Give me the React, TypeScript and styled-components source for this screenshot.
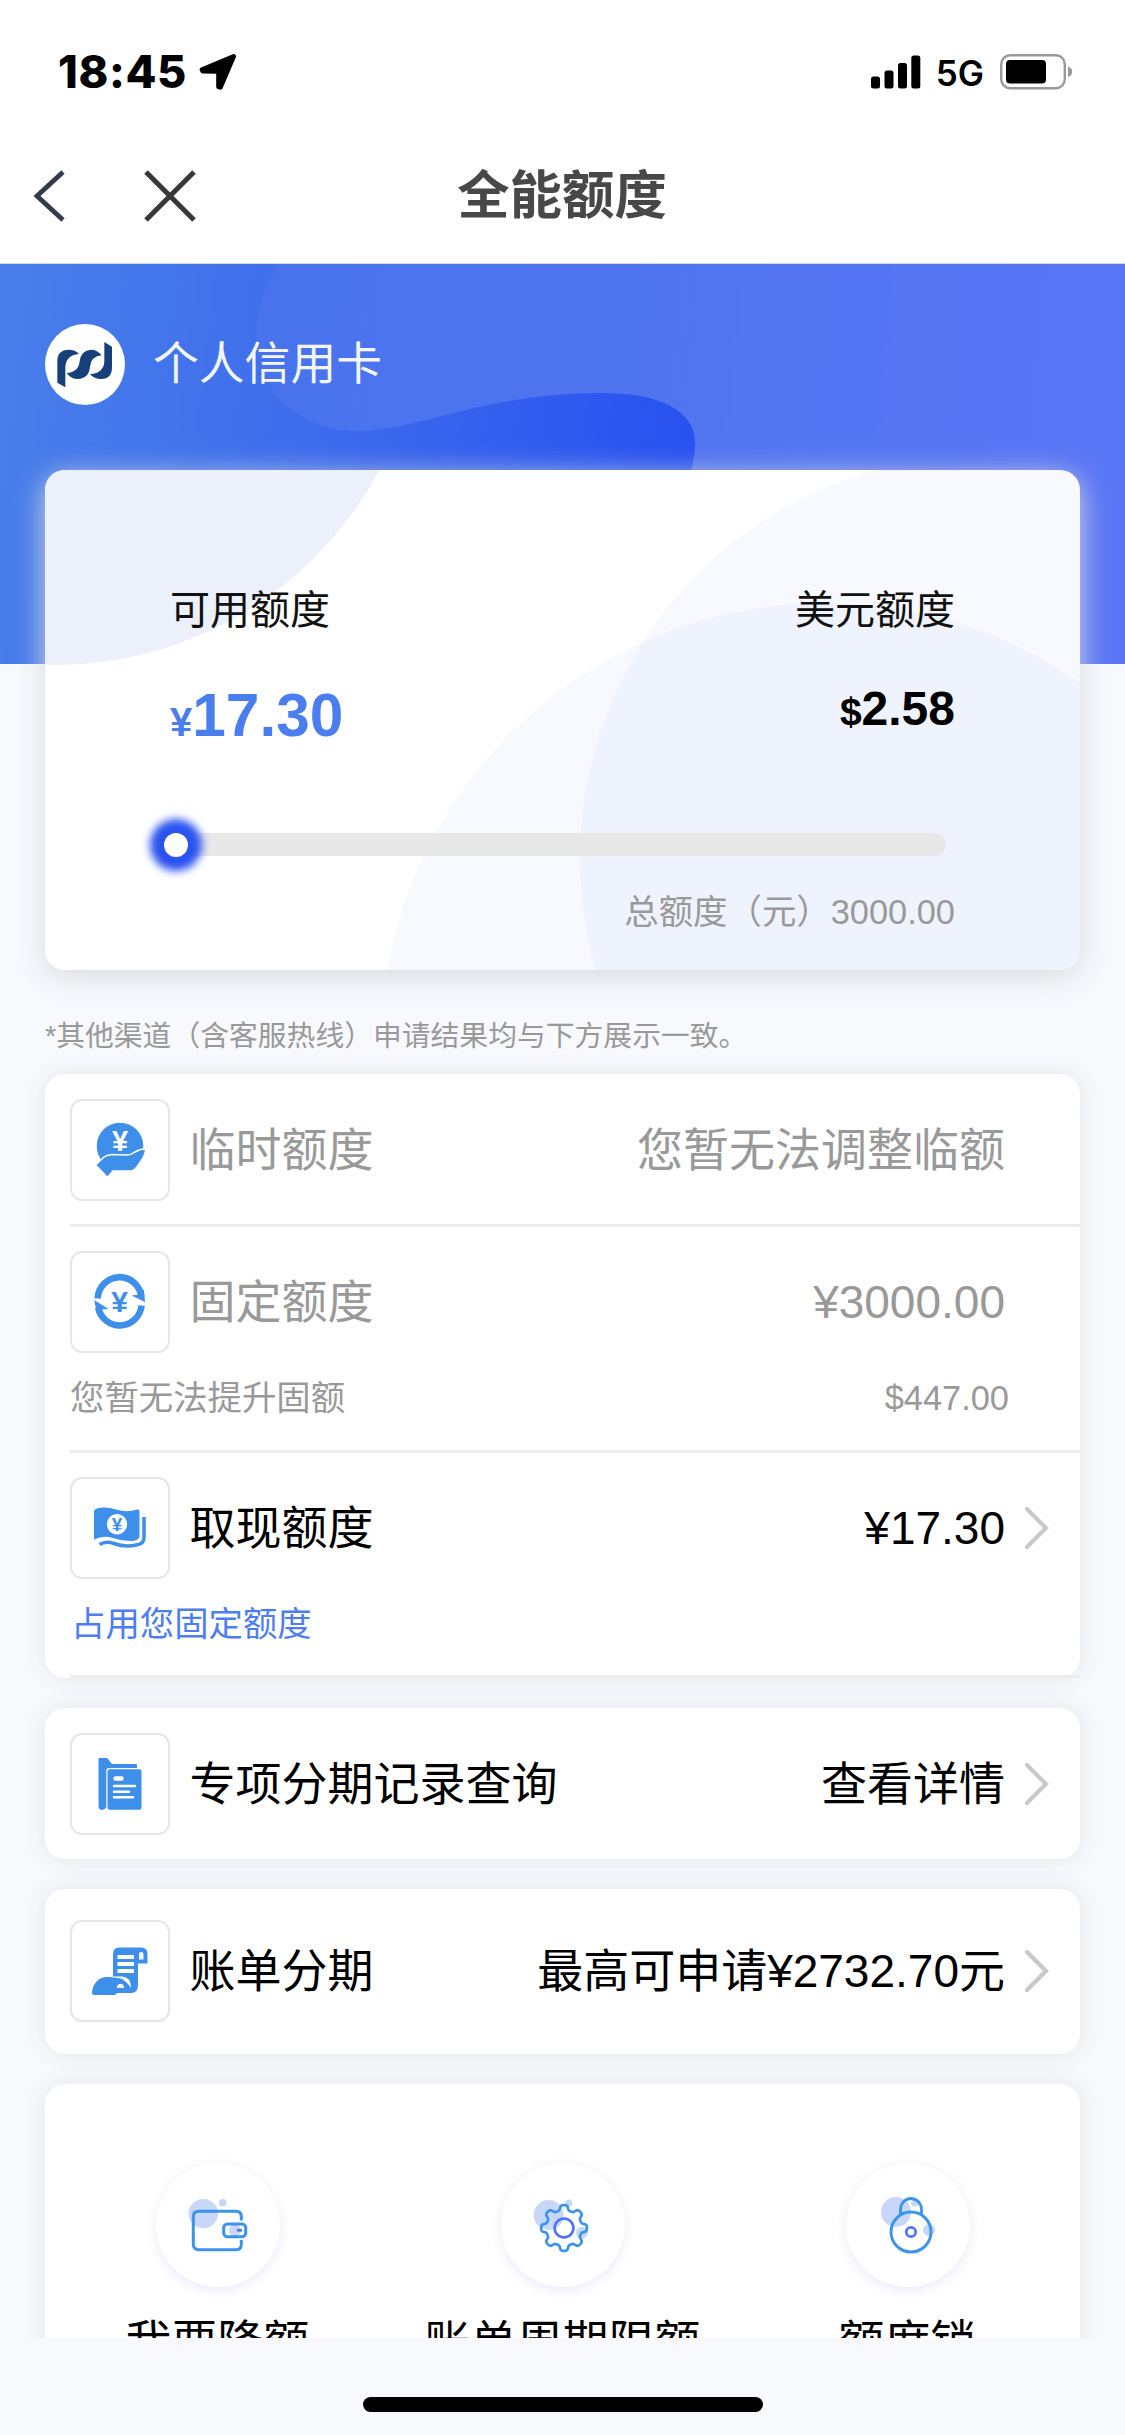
import React from "react";
import styled, { createGlobalStyle } from "styled-components";

const sans = `"Liberation Sans", "Noto Sans CJK SC", sans-serif`;

const GlobalStyle = createGlobalStyle`
  * { box-sizing: border-box; }
  body { margin: 0; background: #f7f9fd; font-family: ${sans}; }
  svg { display: block; flex: none; }
`;

const Screen = styled.div`
  width: 1125px;
  height: 2435px;
  display: flex;
  flex-direction: column;
  overflow: hidden;
  background: #f7f9fd;
`;

/* ---------- status bar and title bar ---------- */

const StatusBar = styled.div`
  height: 129px;
  flex: none;
  display: flex;
  align-items: center;
  justify-content: space-between;
  padding: 14px 52px 0 58px;
  background: #fff;
  font-family: Inter, sans-serif;
  color: #000;
`;

const StatusGroup = styled.div<{ $gap: number }>`
  display: flex;
  align-items: center;
  gap: ${(p) => p.$gap}px;
`;

const Clock = styled.span`
  font-size: 45px;
  font-weight: 800;
  line-height: 50px;
  letter-spacing: 0.6px;
`;

const Network = styled.span`
  font-size: 35px;
  font-weight: 600;
  line-height: 40px;
  margin: 3px 1px 0 0;
`;

const NavBar = styled.header`
  height: 135px;
  flex: none;
  display: grid;
  grid-template-columns: 1fr auto 1fr;
  align-items: center;
  padding-left: 33px;
  background: #fff;
  border-bottom: 1px solid #d4d8e4;
`;

const NavButtons = styled.div`
  display: flex;
  gap: 79px;
`;

const Title = styled.h1`
  margin: 0 34px 0 0;
  font-size: 52.4px;
  line-height: 60px;
  font-weight: 700;
  color: #484848;
`;

/* ---------- scroll area ---------- */

const Content = styled.main`
  height: 2074px;
  flex: none;
  overflow: hidden;
`;

const Hero = styled.section`
  position: relative;
  height: 400px;
`;

const HeroArt = styled.svg`
  position: absolute;
  inset: 0;
`;

const Account = styled.div`
  position: relative;
  display: flex;
  align-items: center;
  gap: 28px;
  padding: 60px 0 0 45px;
`;

const AccountName = styled.span`
  font-size: 45.8px;
  line-height: 60px;
  color: #f2f6ff;
`;

const SummaryCard = styled.section`
  position: relative;
  height: 500px;
  margin: -194px 45px 0;
  border-radius: 20px;
  background: #fff;
  box-shadow: 0 7px 30px #d9dbdf;
`;

const SummaryArt = styled.svg`
  position: absolute;
  inset: 0;
  border-radius: 20px;
`;

const SummaryBody = styled.div`
  position: relative;
  display: flex;
  flex-direction: column;
  padding: 115px 125px 0 125px;
`;

const Split = styled.div<{ $align?: string }>`
  display: flex;
  justify-content: space-between;
  align-items: ${(p) => p.$align ?? "center"};
`;

const LimitLabel = styled.span`
  font-size: 40px;
  line-height: 50px;
  color: #111;
`;

const Amount = styled.div<{ $size: number; $unit: number; $line: number; $color: string }>`
  font-weight: 700;
  font-size: ${(p) => p.$size}px;
  line-height: ${(p) => p.$line}px;
  color: ${(p) => p.$color};
  small { font-size: ${(p) => p.$unit}px; }
`;

const Amounts = styled(Split)`
  margin-top: 45px;
  height: 83px;
`;

const Track = styled.div`
  display: flex;
  align-items: center;
  height: 23px;
  margin: 70px 9px 0 -6px;
  border-radius: 12px;
  background: #e8e8e8;
`;

const Thumb = styled.i`
  width: 24px;
  height: 24px;
  border-radius: 50%;
  background: #fff;
  box-shadow: 0 0 9px 14px #2a52ee;
`;

const Total = styled.div`
  margin-top: 34px;
  text-align: right;
  font-size: 34.4px;
  line-height: 44px;
  color: #999;
`;

const Note = styled.p`
  margin: 46px 0 0 45px;
  font-size: 28.8px;
  line-height: 40px;
  color: #999;
`;

const Card = styled.section<{ $top: number }>`
  margin: ${(p) => p.$top}px 45px 0;
  border-radius: 20px;
  background: #fff;
  box-shadow: 0 0 22px rgba(60, 60, 70, 0.11);
`;

const Item = styled.div<{ $height: number; $top?: number; $line?: boolean }>`
  height: ${(p) => p.$height}px;
  margin-left: 25px;
  padding-top: ${(p) => p.$top ?? 25}px;
  border-bottom: ${(p) => (p.$line ? "3px solid #ededed" : "0")};
`;

const ItemRow = styled.div<{ $muted?: boolean }>`
  display: flex;
  align-items: center;
  height: 102px;
  padding-right: 31px;
  font-size: 46px;
  line-height: 60px;
  color: ${(p) => (p.$muted ? "#999" : "#000")};
`;

const IconBox = styled.div`
  width: 100px;
  height: 102px;
  margin-right: 19.5px;
  border: 2px solid #e6e6e6;
  border-radius: 12px;
  svg { margin: -2px; }
`;

const Value = styled.span`
  margin-left: auto;
`;

const ArrowSlot = styled.span`
  width: 24px;
  margin-left: 20px;
`;

const SubRow = styled.div<{ $color: string; $indent?: number }>`
  display: flex;
  justify-content: space-between;
  margin: 22px 71px 0 ${(p) => p.$indent ?? 0}px;
  font-size: 34.4px;
  line-height: 46px;
  color: ${(p) => p.$color};
`;

const Tools = styled(Card)`
  height: 400px;
  display: grid;
  grid-template-columns: repeat(3, 1fr);
  padding-top: 79px;
`;

const Tool = styled.div`
  display: flex;
  flex-direction: column;
  align-items: center;
  font-size: 46px;
  line-height: 60px;
  color: #000;
  gap: 25px;
`;

const ToolDisc = styled.div`
  width: 124px;
  height: 124px;
  border-radius: 50%;
  background: #fff;
  box-shadow: 0 3px 12px rgba(80, 70, 220, 0.12);
`;

const HomeArea = styled.footer`
  display: flex;
  justify-content: center;
  padding-top: 59px;
`;

const HomeBar = styled.i`
  width: 400px;
  height: 15px;
  border-radius: 8px;
  background: #000;
`;

/* ---------- drawings ---------- */

const BLUE = "#3d8fea";

const Yen = ({ x, y, size, fill }: { x: number; y: number; size: number; fill: string }) => (
  <text x={x} y={y} fontSize={size} fontWeight={700} textAnchor="middle" fill={fill}>
    ¥
  </text>
);

const RowSvg = ({ children }: { children: React.ReactNode }) => (
  <svg width="100" height="102" viewBox="0 0 100 102">{children}</svg>
);

const HandCoin = () => (
  <RowSvg>
    <circle cx="50" cy="47" r="23.3" fill={BLUE} />
    <Yen x={50} y={52} size={29} fill="#fff" />
    <path
      d="M25.5 66L33 59Q36 56 42 55.5L57 56Q61 56 64 53.500L69 51Q72 49.500 76 51Q74 59 69 65Q65 72 61 72H43L37.5 78.500Z"
      fill={BLUE}
      stroke="#fff"
      strokeWidth="1.6"
    />
  </RowSvg>
);

const CycleCoin = () => (
  <RowSvg>
    <g fill="none" stroke={BLUE} strokeWidth="6.6">
      <path d="M27.6 47.5A22 22.6 0 0 1 71.4 46" />
      <path d="M71.6 54.5A22 22.6 0 0 1 28.2 56.5" />
    </g>
    <path d="M61.5 44.5L69 43.5L73.8 38.5L75 51ZM24.2 49L38.5 58L31 58.5L27 63Z" fill={BLUE} />
    <Yen x={49.7} y={61.3} size={30} fill={BLUE} />
  </RowSvg>
);

const Banknote = () => (
  <RowSvg>
    <path
      d="M24 34Q25 31 32 30.5Q39 30 46 32.5Q57 36 67 32.5Q69.5 32 69.5 34.500V59Q69.500 64 60 64Q51 64 43 61Q34 58 24 62.500Z"
      fill={BLUE}
    />
    <path
      d="M29.500 67.500Q36 63.500 44 66.500Q55 70.500 66 68Q74 67 74 61V40"
      fill="none"
      stroke={BLUE}
      strokeWidth="3.5"
    />
    <circle cx="47" cy="47.300" r="10.200" fill="#fff" />
    <Yen x={47} y={53.500} size={19} fill={BLUE} />
  </RowSvg>
);

const FolderDoc = () => (
  <RowSvg>
    <path
      d="M28.500 26Q28.500 25 29.500 25H36.500Q37.500 25 38 26L42 31H66Q67 31 67 32V35H39Q36.300 35 36.300 38V74Q35 77 32.500 77Q28.500 77 28.500 73Z"
      fill={BLUE}
    />
    <rect x="37.500" y="36.300" width="34" height="40.500" rx="2.500" fill={BLUE} />
    <path d="M45.500 45.500H51.500" stroke="#fff" strokeWidth="4.500" strokeLinecap="round" />
    <path d="M44 53H65M44 58.700H59M44 64.300H63" stroke="#fff" strokeWidth="2.600" strokeLinecap="round" />
  </RowSvg>
);

const HandBill = () => (
  <RowSvg>
    <path
      d="M43 34Q43 27.500 49 27.500H71Q77.500 27.500 77.500 34V43.500H68V65Q68 73 61 73H45V58H43Z"
      fill={BLUE}
    />
    <path d="M69 35Q69 32 71 32Q73.500 32 73.500 35V39.500H69Z" fill="#fff" />
    <path d="M47.500 37H64M47.500 44H64M47.500 51H64" stroke="#fff" strokeWidth="4" />
    <path
      d="M22 72Q23 65 27 61Q31 57 37 57H51Q57 57 60 62Q62 66 62 70V73H47L45 75H24Q22 75 22 72Z"
      fill={BLUE}
    />
    <path d="M40 56.500H52Q61 57 61 68Q57 61.500 51 58.500Q46 57.500 40 57Z" fill="#fff" />
    <path d="M47 67Q47.500 63.500 51 64Q54 64 54 68L47 68Z" fill="#fff" />
  </RowSvg>
);

const Arrow = () => (
  <svg width="24" height="42" viewBox="0 0 24 42">
    <path d="M2 2L21 21L2 40" fill="none" stroke="#c7c7cc" strokeWidth="4.200" strokeLinecap="round" />
  </svg>
);

const LIGHT = "#c8d6f7";
const LINE = "#3b94ea";
const VIOLET = "#4d74f3";

const DiscSvg = ({ children }: { children: React.ReactNode }) => (
  <svg width="124" height="124" viewBox="0 0 124 124" fill="none">{children}</svg>
);

const Wallet = () => (
  <DiscSvg>
    <circle cx="47.300" cy="50.700" r="14.700" fill={LIGHT} />
    <circle cx="66.700" cy="39.700" r="3.800" fill={LIGHT} />
    <circle cx="79" cy="67.300" r="6" fill={LIGHT} />
    <path
      d="M85.300 57.500V53.500Q85.300 48.300 80 48.300H43Q37.300 48.300 37.300 54V81Q37.300 86.800 43 86.800H80Q85.300 86.800 85.300 81.500V77"
      stroke={LINE}
      strokeWidth="3"
    />
    <rect x="67.700" y="61" width="22" height="12.800" rx="3.800" stroke={LINE} strokeWidth="3" />
    <path d="M81 67.300H86" stroke={VIOLET} strokeWidth="2.600" />
  </DiscSvg>
);

const gearPoints = Array.from({ length: 240 }, (_, i) => {
  const a = (i / 240) * Math.PI * 2;
  const wave = Math.tanh(2 * Math.cos(8 * a));
  const r = 20.4 + 2.6 * wave;
  return `${(63 + r * Math.cos(a)).toFixed(2)},${(65 + r * Math.sin(a)).toFixed(2)}`;
}).join(" ");

const Gear = () => (
  <DiscSvg>
    <circle cx="47.700" cy="52" r="15" fill={LIGHT} />
    <circle cx="67.700" cy="40" r="3.600" fill={LIGHT} />
    <circle cx="81" cy="69.700" r="6" fill={LIGHT} />
    <polygon points={gearPoints} stroke={LINE} strokeWidth="2.700" strokeLinejoin="round" />
    <circle cx="63" cy="65" r="9.400" stroke={VIOLET} strokeWidth="2.700" />
  </DiscSvg>
);

const Padlock = () => (
  <DiscSvg>
    <circle cx="50" cy="49" r="15" fill={LIGHT} />
    <circle cx="68.700" cy="40" r="3.600" fill={LIGHT} />
    <circle cx="83" cy="67" r="6" fill={LIGHT} />
    <path d="M54.500 51.500V46.500A10.500 11 0 0 1 75.500 46.500V51.500" stroke={LINE} strokeWidth="2.800" />
    <circle cx="65" cy="69" r="20" stroke={LINE} strokeWidth="2.900" />
    <circle cx="65" cy="69" r="4.700" stroke={VIOLET} strokeWidth="2.700" />
  </DiscSvg>
);

const BankLogo = () => (
  <svg width="80" height="81" viewBox="45 880 240 243">
    <ellipse cx="165" cy="1001.500" rx="120" ry="121.500" fill="#fff" />
    <g fill="#173f79">
      <path d="M82 1056V992Q82 957 116 957Q136 957 147 970Q106 974 106 1012V1070Z" />
      <path d="M215 974Q202 957 183 957Q153 959 149 992Q145 1026 110 1027Q123 1045 143 1045Q177 1043 180 1008Q183 977 215 974Z" />
      <path d="M223 934L246 948V1010Q246 1045 214 1045Q192 1045 180 1031Q223 1026 223 990Z" />
    </g>
  </svg>
);

const HeroBackground = () => (
  <HeroArt width="1125" height="400" viewBox="0 264 1125 400">
    <defs>
      <linearGradient id="deep" gradientUnits="userSpaceOnUse" x1="0" y1="360" x2="700" y2="450">
        <stop offset="0" stopColor="#487eea" />
        <stop offset="0.450" stopColor="#3e6cec" />
        <stop offset="1" stopColor="#2850f0" />
      </linearGradient>
      <linearGradient id="soft" gradientUnits="userSpaceOnUse" x1="250" y1="360" x2="1160" y2="450">
        <stop offset="0" stopColor="#4873ec" />
        <stop offset="1" stopColor="#5a76f6" />
      </linearGradient>
    </defs>
    <rect y="264" width="1125" height="400" fill="url(#deep)" />
    <path
      d="M278 264C262 292 254 318 257 350C262 392 300 431 359 431C420 431 480 393 603 393C665 393 697 414 695 446C694 470 684 500 660 560L640 664H1125V264Z"
      fill="url(#soft)"
    />
  </HeroArt>
);

type RowProps = { icon: React.ReactNode; label: string; value: string; muted?: boolean };

const LimitRow = ({ icon, label, value, muted }: RowProps) => (
  <ItemRow $muted={muted}>
    <IconBox>{icon}</IconBox>
    <span>{label}</span>
    <Value>{value}</Value>
    <ArrowSlot>{!muted && <Arrow />}</ArrowSlot>
  </ItemRow>
);

export default function App() {
  return (
    <Screen>
      <GlobalStyle />
      <StatusBar>
        <StatusGroup $gap={12}>
          <Clock>18:45</Clock>
          <svg width="38" height="38" viewBox="508 69 115 115">
            <path
              d="M519 124L517 119L613 79L573 173L567 171V125Z"
              stroke="#000"
              strokeWidth="14"
              strokeLinejoin="round"
            />
          </svg>
        </StatusGroup>
        <StatusGroup $gap={15}>
          <svg width="50" height="34" viewBox="0 0 50 34">
            <rect x="0" y="21.500" width="9" height="12" rx="2.500" />
            <rect x="13.500" y="15.500" width="9" height="18" rx="2.500" />
            <rect x="27" y="8" width="9" height="25.500" rx="2.500" />
            <rect x="40.300" y="0.500" width="9" height="33" rx="2.500" />
          </svg>
          <Network>5G</Network>
          <svg width="73" height="36" viewBox="0 0 73 36">
            <rect x="1.200" y="1.200" width="63.600" height="33" rx="9" fill="none" stroke="#999" strokeWidth="2.400" />
            <rect x="6" y="6" width="40" height="23.500" rx="4" />
            <path d="M68 12.500Q72.200 14 72.200 17.700Q72.200 21.500 68 23Z" fill="#999" />
          </svg>
        </StatusGroup>
      </StatusBar>

      <NavBar>
        <NavButtons>
          <svg width="32" height="52" viewBox="0 0 32 52">
            <path d="M30 2L4 26L30 50" fill="none" stroke="#323b4a" strokeWidth="4.800" />
          </svg>
          <svg width="52" height="52" viewBox="0 0 52 52">
            <path d="M2 2L50 50M50 2L2 50" stroke="#383838" strokeWidth="5" />
          </svg>
        </NavButtons>
        <Title>全能额度</Title>
      </NavBar>

      <Content>
        <Hero>
          <HeroBackground />
          <Account>
            <BankLogo />
            <AccountName>个人信用卡</AccountName>
          </Account>
        </Hero>

        <SummaryCard>
          <SummaryArt width="1035" height="500" viewBox="45 470 1035 500">
            <circle cx="55" cy="298" r="367" fill="#ecf0fb" />
            <g fill="#4a78e0" fillOpacity="0.043">
              <circle cx="982" cy="858" r="402" />
              <circle cx="825" cy="1048" r="445" />
            </g>
          </SummaryArt>
          <SummaryBody>
            <Split>
              <LimitLabel>可用额度</LimitLabel>
              <LimitLabel>美元额度</LimitLabel>
            </Split>
            <Amounts $align="flex-start">
              <Amount $size={60.4} $unit={40} $line={70} $color="#4a7dee">
                <small>¥</small>17.30
              </Amount>
              <Amount $size={48} $unit={39} $line={57} $color="#000">
                <small>$</small>2.58
              </Amount>
            </Amounts>
            <Track>
              <Thumb />
            </Track>
            <Total>总额度（元）3000.00</Total>
          </SummaryBody>
        </SummaryCard>

        <Note>*其他渠道（含客服热线）申请结果均与下方展示一致。</Note>

        <Card $top={18}>
          <Item $height={153} $line>
            <LimitRow muted icon={<HandCoin />} label="临时额度" value="您暂无法调整临额" />
          </Item>
          <Item $height={226} $top={24} $line>
            <LimitRow muted icon={<CycleCoin />} label="固定额度" value="¥3000.00" />
            <SubRow $color="#999">
              <span>您暂无法提升固额</span>
              <span>$447.00</span>
            </SubRow>
          </Item>
          <Item $height={225} $top={24} $line>
            <LimitRow icon={<Banknote />} label="取现额度" value="¥17.30" />
            <SubRow $color="#4c7df2" $indent={1}>
              <span>占用您固定额度</span>
            </SubRow>
          </Item>
        </Card>

        <Card $top={30}>
          <Item $height={151}>
            <LimitRow icon={<FolderDoc />} label="专项分期记录查询" value="查看详情" />
          </Item>
        </Card>

        <Card $top={30}>
          <Item $height={165} $top={31}>
            <LimitRow icon={<HandBill />} label="账单分期" value="最高可申请¥2732.70元" />
          </Item>
        </Card>

        <Tools $top={30}>
          <Tool>
            <ToolDisc><Wallet /></ToolDisc>
            我要降额
          </Tool>
          <Tool>
            <ToolDisc><Gear /></ToolDisc>
            账单周期限额
          </Tool>
          <Tool>
            <ToolDisc><Padlock /></ToolDisc>
            额度锁
          </Tool>
        </Tools>
      </Content>

      <HomeArea>
        <HomeBar />
      </HomeArea>
    </Screen>
  );
}
